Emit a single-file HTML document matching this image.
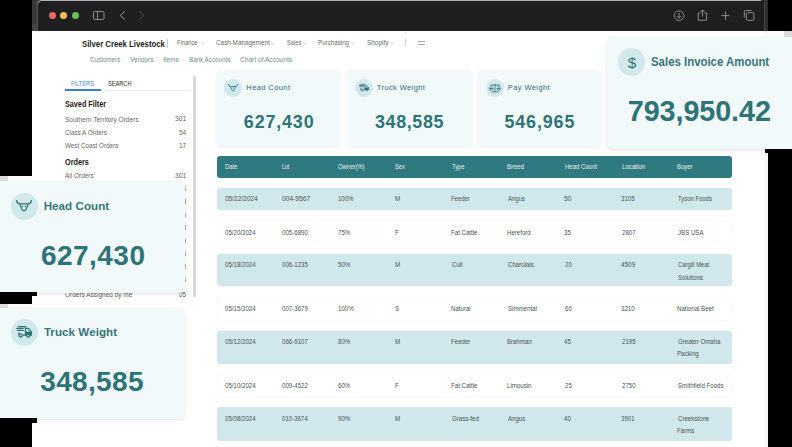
<!DOCTYPE html><html><head><meta charset="utf-8"><style>
*{margin:0;padding:0;box-sizing:border-box}
html,body{width:792px;height:447px;overflow:hidden;background:#000}
body{position:relative;font-family:"Liberation Sans",sans-serif}
.t{position:absolute;white-space:nowrap;line-height:1}
.card{position:absolute;background:#f1f9fb;border-radius:4px}
.ic{position:absolute;border-radius:50%;background:#d1e8ec}
.row{position:absolute;left:217px;width:515px;border-radius:3px}
.rb{background:#d0e7ec}
.rw{background:#fff;box-shadow:0 0 1.2px rgba(0,0,0,0.15)}
svg{position:absolute;overflow:visible}
</style></head><body>
<div style="position:absolute;left:32px;top:0;width:7px;height:31.4px;background:#38383a"></div>
<div style="position:absolute;left:32px;top:24px;width:6px;height:7.4px;background:#444446"></div>
<div style="position:absolute;left:761px;top:0;width:7px;height:31.4px;background:#2e2e30"></div>
<div style="position:absolute;left:32px;top:0;width:12px;height:6px;background:#3a3a3c"></div>
<div style="position:absolute;left:37.2px;top:0;width:724px;height:31px;background:#1f1f22;border-top-left-radius:5px;box-shadow:inset 0 1px 0 #b0b0b2, inset 0.7px 0 0 #6a6a6c"></div>
<div style="position:absolute;left:32px;top:31px;width:736px;height:416px;background:#fff"></div>
<div style="position:absolute;left:764.5px;top:31px;width:3.5px;height:416px;background:#f6f6f6"></div>
<div style="position:absolute;left:761px;top:1px;width:3.5px;height:30px;background:#1f1f22"></div>
<div style="position:absolute;left:764.2px;top:1px;width:0.8px;height:30px;background:#4a4a4c"></div>
<div style="position:absolute;left:0;top:175.8px;width:8px;height:5.5px;background:#dcdcdc"></div>
<div style="position:absolute;left:8px;top:175.8px;width:24px;height:5.5px;background:#fbfbfb"></div>
<div style="position:absolute;left:0;top:303.7px;width:8px;height:4px;background:#dcdcdc"></div>
<div style="position:absolute;left:8px;top:303.7px;width:24px;height:4px;background:#fbfbfb"></div>
<div style="position:absolute;left:768px;top:31.4px;width:16px;height:7px;background:#fbfbfb"></div>
<div style="position:absolute;left:784px;top:31.4px;width:8px;height:7px;background:#dcdcdc"></div>
<div style="position:absolute;left:48.6px;top:12px;width:7.2px;height:7.2px;border-radius:50%;background:#ec6a5e"></div>
<div style="position:absolute;left:60.0px;top:12px;width:7.2px;height:7.2px;border-radius:50%;background:#f4bf4f"></div>
<div style="position:absolute;left:71.6px;top:12px;width:7.2px;height:7.2px;border-radius:50%;background:#61c454"></div>
<svg style="left:0;top:0" width="792" height="31"><rect x="93.5" y="11.5" width="10.5" height="8" rx="1.2" fill="none" stroke="#8d8d90" stroke-width="1"/><line x1="97.5" y1="11.5" x2="97.5" y2="19.5" stroke="#8d8d90" stroke-width="1"/><path d="M124.8 11.3 L120.3 15.5 L124.8 19.7" fill="none" stroke="#9d9d9f" stroke-width="1"/><path d="M139.3 11.3 L143.8 15.5 L139.3 19.7" fill="none" stroke="#4d4d50" stroke-width="1"/><circle cx="679" cy="15.7" r="4.8" fill="none" stroke="#9a9a9c" stroke-width="0.9"/><path d="M679 13 L679 18 M677 16.2 L679 18.2 L681 16.2" fill="none" stroke="#9a9a9c" stroke-width="0.9"/><path d="M700.3 13 L698.3 13 L698.3 20.2 L706.6 20.2 L706.6 13 L704.6 13" fill="none" stroke="#9a9a9c" stroke-width="0.9"/><path d="M702.5 16.5 L702.5 10 M700.5 12 L702.5 10 L704.5 12" fill="none" stroke="#9a9a9c" stroke-width="0.9"/><path d="M725.5 11.5 V19.8 M721.4 15.6 H729.6" stroke="#9a9a9c" stroke-width="0.9"/><path d="M744.3 17.5 V11.8 Q744.3 10.5 745.6 10.5 H751.5" fill="none" stroke="#9a9a9c" stroke-width="0.9"/><rect x="746.3" y="12.7" width="7.6" height="7.6" rx="1" fill="none" stroke="#9a9a9c" stroke-width="0.9"/></svg>
<div class="t" id="brand" style="left:81.73px;top:40.36px;font-size:8.551px;letter-spacing:0.000px;transform:scaleX(0.9088);transform-origin:0 0;color:#1c1c1e;font-weight:bold">Silver Creek Livestock</div>
<div style="position:absolute;left:167.3px;top:38.5px;width:0.7px;height:9px;background:#c8c8c8"></div>
<div class="t" id="n1_0" style="left:177.47px;top:39.42px;font-size:7.536px;letter-spacing:0.000px;transform:scaleX(0.7694);transform-origin:0 0;color:#6a6a6c;font-weight:normal">Finance</div>
<div class="t" id="n1_1" style="left:216.12px;top:39.42px;font-size:7.536px;letter-spacing:0.000px;transform:scaleX(0.8466);transform-origin:0 0;color:#6a6a6c;font-weight:normal">Cash Management</div>
<div class="t" id="n1_2" style="left:286.71px;top:39.42px;font-size:7.536px;letter-spacing:0.000px;transform:scaleX(0.7582);transform-origin:0 0;color:#6a6a6c;font-weight:normal">Sales</div>
<div class="t" id="n1_3" style="left:317.94px;top:39.42px;font-size:7.536px;letter-spacing:0.000px;transform:scaleX(0.8258);transform-origin:0 0;color:#6a6a6c;font-weight:normal">Purchasing</div>
<div class="t" id="n1_4" style="left:366.68px;top:39.42px;font-size:7.536px;letter-spacing:0.000px;transform:scaleX(0.8536);transform-origin:0 0;color:#6a6a6c;font-weight:normal">Shopify</div>
<svg style="left:0;top:0" width="792" height="60"><path d="M201.0 42.6 L202.8 44.4 L204.6 42.6 M271.0 42.6 L272.8 44.4 L274.6 42.6 M303.5 42.6 L305.3 44.4 L307.1 42.6 M351.2 42.6 L353.0 44.4 L354.8 42.6 M390.0 42.6 L391.8 44.4 L393.6 42.6 " fill="none" stroke="#aaa" stroke-width="0.6"/></svg>
<div style="position:absolute;left:405px;top:38.7px;width:0.7px;height:8.6px;background:#d4d4d4"></div>
<div style="position:absolute;left:418.3px;top:40.8px;width:6.6px;height:1.3px;background:#ababab"></div>
<div style="position:absolute;left:418.3px;top:44.2px;width:6.6px;height:1.3px;background:#ababab"></div>
<div class="t" id="n2_0" style="left:90.12px;top:57.34px;font-size:6.667px;letter-spacing:0.000px;transform:scaleX(0.9412);transform-origin:0 0;color:#6f8e8e;font-weight:normal">Customers</div>
<div class="t" id="n2_1" style="left:129.95px;top:57.34px;font-size:6.667px;letter-spacing:0.000px;transform:scaleX(0.9583);transform-origin:0 0;color:#6f8e8e;font-weight:normal">Vendors</div>
<div class="t" id="n2_2" style="left:163.34px;top:57.34px;font-size:6.667px;letter-spacing:0.000px;transform:scaleX(0.9607);transform-origin:0 0;color:#6f8e8e;font-weight:normal">Items</div>
<div class="t" id="n2_3" style="left:188.90px;top:57.34px;font-size:6.667px;letter-spacing:0.000px;transform:scaleX(0.9370);transform-origin:0 0;color:#6f8e8e;font-weight:normal">Bank Accounts</div>
<div class="t" id="n2_4" style="left:240.10px;top:57.34px;font-size:6.667px;letter-spacing:0.000px;transform:scaleX(0.9912);transform-origin:0 0;color:#6f8e8e;font-weight:normal">Chart of Accounts</div>
<div class="t" id="filters" style="left:71.01px;top:79.88px;font-size:7.681px;letter-spacing:0.000px;transform:scaleX(0.7407);transform-origin:0 0;color:#4a8cd8;font-weight:normal">FILTERS</div>
<div class="t" id="search" style="left:107.74px;top:79.88px;font-size:7.681px;letter-spacing:0.000px;transform:scaleX(0.7342);transform-origin:0 0;color:#2c2c2c;font-weight:normal">SEARCH</div>
<div style="position:absolute;left:64.3px;top:89.8px;width:126px;height:0.8px;background:#ebebeb"></div>
<div style="position:absolute;left:64.5px;top:89.2px;width:36.2px;height:1.5px;background:#3a7fd2"></div>
<div style="position:absolute;left:192.9px;top:76px;width:2.9px;height:221px;background:#d9d9d9;border-radius:1px"></div>
<div class="t" id="saved" style="left:64.72px;top:100.99px;font-size:8.261px;letter-spacing:0.000px;transform:scaleX(0.8769);transform-origin:0 0;color:#1a1a1a;font-weight:bold">Saved Filter</div>
<div class="t" id="orders" style="left:64.64px;top:158.93px;font-size:8.261px;letter-spacing:0.000px;transform:scaleX(0.8842);transform-origin:0 0;color:#1a1a1a;font-weight:bold">Orders</div>
<div class="t" id="sd_0" style="left:64.70px;top:116.76px;font-size:6.667px;letter-spacing:0.000px;transform:scaleX(0.9810);transform-origin:0 0;color:#686868;font-weight:normal">Southern Territory Orders</div>
<div class="t" id="sd_1" style="left:64.66px;top:130.19px;font-size:6.667px;letter-spacing:0.000px;transform:scaleX(0.9429);transform-origin:0 0;color:#686868;font-weight:normal">Class A Orders</div>
<div class="t" id="sd_2" style="left:64.95px;top:143.42px;font-size:6.667px;letter-spacing:0.000px;transform:scaleX(0.9440);transform-origin:0 0;color:#686868;font-weight:normal">West Coast Orders</div>
<div class="t" id="sd_3" style="left:64.98px;top:173.42px;font-size:6.667px;letter-spacing:0.000px;transform:scaleX(0.9695);transform-origin:0 0;color:#686868;font-weight:normal">All Orders</div>
<div class="t" id="sn_0" style="left:175.07px;top:116.43px;font-size:6.667px;letter-spacing:0.000px;transform:scaleX(1.0017);transform-origin:0 0;color:#686868;font-weight:normal">301</div>
<div class="t" id="sn_1" style="left:178.50px;top:130.19px;font-size:6.667px;letter-spacing:0.000px;transform:scaleX(0.9771);transform-origin:0 0;color:#686868;font-weight:normal">54</div>
<div class="t" id="sn_2" style="left:178.64px;top:143.42px;font-size:6.667px;letter-spacing:0.000px;transform:scaleX(0.9758);transform-origin:0 0;color:#686868;font-weight:normal">17</div>
<div class="t" id="sn_3" style="left:175.07px;top:173.39px;font-size:6.667px;letter-spacing:0.000px;transform:scaleX(1.0017);transform-origin:0 0;color:#686868;font-weight:normal">301</div>
<div class="t" id="hd_0" style="left:64.51px;top:185.98px;font-size:6.667px;letter-spacing:0.000px;transform:scaleX(0.9758);transform-origin:0 0;color:#686868;font-weight:normal">Open Orders</div>
<div class="t" id="hd_1" style="left:64.48px;top:198.93px;font-size:6.667px;letter-spacing:0.000px;transform:scaleX(0.9758);transform-origin:0 0;color:#686868;font-weight:normal">Closed Orders</div>
<div class="t" id="hd_2" style="left:64.29px;top:211.88px;font-size:6.667px;letter-spacing:0.000px;transform:scaleX(0.9758);transform-origin:0 0;color:#686868;font-weight:normal">Pending Orders</div>
<div class="t" id="hd_3" style="left:64.51px;top:224.83px;font-size:6.667px;letter-spacing:0.000px;transform:scaleX(0.9758);transform-origin:0 0;color:#686868;font-weight:normal">Shipped Orders</div>
<div class="t" id="hd_4" style="left:64.23px;top:237.78px;font-size:6.667px;letter-spacing:0.000px;transform:scaleX(0.9758);transform-origin:0 0;color:#686868;font-weight:normal">Invoiced Orders</div>
<div class="t" id="hd_5" style="left:64.29px;top:250.73px;font-size:6.667px;letter-spacing:0.000px;transform:scaleX(0.9758);transform-origin:0 0;color:#686868;font-weight:normal">Draft Orders</div>
<div class="t" id="hd_6" style="left:64.48px;top:263.68px;font-size:6.667px;letter-spacing:0.000px;transform:scaleX(0.9758);transform-origin:0 0;color:#686868;font-weight:normal">Cancelled Orders</div>
<div class="t" id="hd_7" style="left:64.29px;top:276.63px;font-size:6.667px;letter-spacing:0.000px;transform:scaleX(0.9758);transform-origin:0 0;color:#686868;font-weight:normal">Returned Orders</div>
<div class="t" id="hn_0" style="left:178.87px;top:185.98px;font-size:6.667px;letter-spacing:0.000px;transform:scaleX(0.9758);transform-origin:0 0;color:#686868;font-weight:normal">24</div>
<div class="t" id="hn_1" style="left:175.87px;top:198.93px;font-size:6.667px;letter-spacing:0.000px;transform:scaleX(0.9758);transform-origin:0 0;color:#686868;font-weight:normal">118</div>
<div class="t" id="hn_2" style="left:178.93px;top:211.88px;font-size:6.667px;letter-spacing:0.000px;transform:scaleX(0.9758);transform-origin:0 0;color:#686868;font-weight:normal">36</div>
<div class="t" id="hn_3" style="left:178.93px;top:224.83px;font-size:6.667px;letter-spacing:0.000px;transform:scaleX(0.9758);transform-origin:0 0;color:#686868;font-weight:normal">48</div>
<div class="t" id="hn_4" style="left:178.93px;top:237.78px;font-size:6.667px;letter-spacing:0.000px;transform:scaleX(0.9758);transform-origin:0 0;color:#686868;font-weight:normal">25</div>
<div class="t" id="hn_5" style="left:178.94px;top:250.73px;font-size:6.667px;letter-spacing:0.000px;transform:scaleX(0.9758);transform-origin:0 0;color:#686868;font-weight:normal">16</div>
<div class="t" id="hn_6" style="left:178.94px;top:263.68px;font-size:6.667px;letter-spacing:0.000px;transform:scaleX(0.9758);transform-origin:0 0;color:#686868;font-weight:normal">18</div>
<div class="t" id="hn_7" style="left:178.86px;top:276.63px;font-size:6.667px;letter-spacing:0.000px;transform:scaleX(0.9758);transform-origin:0 0;color:#686868;font-weight:normal">34</div>
<div class="t" id="assigned" style="left:64.67px;top:291.53px;font-size:6.667px;letter-spacing:0.000px;transform:scaleX(0.9726);transform-origin:0 0;color:#5a5a5a;font-weight:normal">Orders Assigned by me</div>
<div class="t" id="assn" style="left:178.57px;top:291.53px;font-size:6.667px;letter-spacing:0.000px;transform:scaleX(0.9758);transform-origin:0 0;color:#5a5a5a;font-weight:normal">05</div>
<div class="card" style="left:217px;top:71px;width:123.3px;height:75.4px;box-shadow:0 0.5px 4px rgba(0,0,0,0.07)"></div>
<div class="ic" style="left:224.10px;top:78.80px;width:18px;height:18px"></div>
<svg style="left:227.90px;top:83.90px" width="10.00" height="7.50" viewBox="0 0 20 15"><path d="M1.0 0.8 C0.9 3.2 2.2 4.6 4.6 4.8 H15.4 C17.8 4.6 19.1 3.2 19.0 0.8" fill="none" stroke="#2f7276" stroke-width="1.72" stroke-linecap="round"/><path d="M4.8 5.2 L5.6 7.6 L8.2 13.0 Q10 14.6 11.8 13.0 L14.4 7.6 L15.2 5.2" fill="none" stroke="#2f7276" stroke-width="1.5" stroke-linejoin="round"/><circle cx="8.2" cy="8.0" r="0.95" fill="#2f7276"/><circle cx="11.8" cy="8.0" r="0.95" fill="#2f7276"/></svg>
<div class="t" id="c1t" style="left:246.34px;top:84.40px;font-size:7.536px;letter-spacing:0.395px;color:#2f6e72;font-weight:normal">Head Count</div>
<div class="t" id="c1n" style="left:243.85px;top:114.27px;font-size:17.917px;letter-spacing:0.843px;color:#2e7377;font-weight:bold">627,430</div>
<div class="card" style="left:347.2px;top:71px;width:124.4px;height:75.4px;box-shadow:0 0.5px 4px rgba(0,0,0,0.07)"></div>
<div class="ic" style="left:354.60px;top:78.80px;width:18px;height:18px"></div>
<svg style="left:359.06px;top:83.50px" width="9.92" height="7.44" viewBox="-2 0 16 12"><path d="M0 0.6 H7.5 V9.2 M7.5 2.3 H10.4 L13.4 5.8 V9.2 H12.1 M8.4 9.2 H4.6 M0.9 6.4 V8.6" fill="none" stroke="#2f7276" stroke-width="1.3" stroke-linejoin="round"/><path d="M-1.3 2.3 H5.2 M-0.6 4.4 H5.2" fill="none" stroke="#2f7276" stroke-width="1.3" stroke-linecap="round"/><path d="M7.5 5.6 H13.4 V9.2 H7.5 Z" fill="#2f7276"/><circle cx="2.6" cy="9.5" r="1.6" fill="none" stroke="#2f7276" stroke-width="1.3"/><circle cx="10.2" cy="9.5" r="1.6" fill="none" stroke="#2f7276" stroke-width="1.3"/></svg>
<div class="t" id="c2t" style="left:376.87px;top:84.40px;font-size:7.536px;letter-spacing:0.376px;color:#2f6e72;font-weight:normal">Truck Weight</div>
<div class="t" id="c2n" style="left:374.99px;top:114.27px;font-size:17.917px;letter-spacing:0.629px;color:#2e7377;font-weight:bold">348,585</div>
<div class="card" style="left:478.3px;top:71px;width:122.7px;height:75.2px;box-shadow:0 0.5px 4px rgba(0,0,0,0.07)"></div>
<div class="ic" style="left:486.00px;top:78.80px;width:18px;height:18px"></div>
<svg style="left:489.00px;top:83.50px" width="12.00" height="9.00" viewBox="0 0 12 9"><path d="M6 0.2 V7.8 M3.2 7.9 H8.8 M2.2 1.0 H9.8" fill="none" stroke="#2f7276" stroke-width="0.85" stroke-linecap="round"/><path d="M0.4 4.4 A1.8 1.9 0 0 0 4.0 4.4 Z M8.0 4.4 A1.8 1.9 0 0 0 11.6 4.4 Z" fill="none" stroke="#2f7276" stroke-width="0.85" stroke-linejoin="round"/><path d="M2.2 1.0 L0.6 4.3 M2.2 1.0 L3.8 4.3 M9.8 1.0 L8.2 4.3 M9.8 1.0 L11.4 4.3" fill="none" stroke="#2f7276" stroke-width="0.59"/></svg>
<div class="t" id="c3t" style="left:507.80px;top:84.40px;font-size:7.536px;letter-spacing:0.395px;color:#2f6e72;font-weight:normal">Pay Weight</div>
<div class="t" id="c3n" style="left:504.46px;top:114.27px;font-size:17.917px;letter-spacing:0.869px;color:#2e7377;font-weight:bold">546,965</div>
<div style="position:absolute;left:217px;top:156px;width:515px;height:21.6px;background:#2e7a80;border-radius:3px"></div>
<div class="t" id="th_0" style="left:224.51px;top:164.22px;font-size:6.377px;letter-spacing:0.000px;transform:scaleX(0.9267);transform-origin:0 0;color:#e4f1f2;font-weight:normal">Date</div>
<div class="t" id="th_1" style="left:281.51px;top:164.22px;font-size:6.377px;letter-spacing:0.000px;transform:scaleX(0.8230);transform-origin:0 0;color:#e4f1f2;font-weight:normal">Lot</div>
<div class="t" id="th_2" style="left:338.20px;top:164.22px;font-size:6.377px;letter-spacing:0.000px;transform:scaleX(0.9281);transform-origin:0 0;color:#e4f1f2;font-weight:normal">Owner(%)</div>
<div class="t" id="th_3" style="left:394.72px;top:164.22px;font-size:6.377px;letter-spacing:0.000px;transform:scaleX(0.9017);transform-origin:0 0;color:#e4f1f2;font-weight:normal">Sex</div>
<div class="t" id="th_4" style="left:451.84px;top:164.22px;font-size:6.377px;letter-spacing:0.000px;transform:scaleX(0.8997);transform-origin:0 0;color:#e4f1f2;font-weight:normal">Type</div>
<div class="t" id="th_5" style="left:507.49px;top:164.22px;font-size:6.377px;letter-spacing:0.000px;transform:scaleX(1.0074);transform-origin:0 0;color:#e4f1f2;font-weight:normal">Breed</div>
<div class="t" id="th_6" style="left:564.93px;top:164.22px;font-size:6.377px;letter-spacing:0.000px;transform:scaleX(0.9386);transform-origin:0 0;color:#e4f1f2;font-weight:normal">Head Count</div>
<div class="t" id="th_7" style="left:621.93px;top:164.22px;font-size:6.377px;letter-spacing:0.000px;transform:scaleX(0.9662);transform-origin:0 0;color:#e4f1f2;font-weight:normal">Location</div>
<div class="t" id="th_8" style="left:677.49px;top:164.22px;font-size:6.377px;letter-spacing:0.000px;transform:scaleX(0.9296);transform-origin:0 0;color:#e4f1f2;font-weight:normal">Buyer</div>
<div class="row rb" style="top:188.3px;height:21.4px"></div>
<div class="row rw" style="top:221px;height:21.0px"></div>
<div class="row rb" style="top:253.6px;height:32.8px"></div>
<div class="row rw" style="top:297.6px;height:22.0px"></div>
<div class="row rb" style="top:330.6px;height:33.0px"></div>
<div class="row rw" style="top:374.6px;height:21.4px"></div>
<div class="row rb" style="top:407.4px;height:33.2px"></div>
<div class="t" id="td_0_0" style="left:224.75px;top:196.29px;font-size:6.806px;letter-spacing:0.000px;transform:scaleX(0.9579);transform-origin:0 0;color:#4a5454;font-weight:normal">05/22/2024</div>
<div class="t" id="td_0_1" style="left:281.75px;top:196.29px;font-size:6.806px;letter-spacing:0.000px;transform:scaleX(0.9794);transform-origin:0 0;color:#4a5454;font-weight:normal">004-9567</div>
<div class="t" id="td_0_2" style="left:338.00px;top:196.29px;font-size:6.806px;letter-spacing:0.000px;transform:scaleX(0.8920);transform-origin:0 0;color:#4a5454;font-weight:normal">100%</div>
<div class="t" id="td_0_3" style="left:395.36px;top:196.29px;font-size:6.806px;letter-spacing:0.000px;transform:scaleX(0.8990);transform-origin:0 0;color:#4a5454;font-weight:normal">M</div>
<div class="t" id="td_0_4" style="left:451.46px;top:196.29px;font-size:6.806px;letter-spacing:0.000px;transform:scaleX(0.8699);transform-origin:0 0;color:#4a5454;font-weight:normal">Feeder</div>
<div class="t" id="td_0_5" style="left:507.98px;top:196.29px;font-size:6.806px;letter-spacing:0.000px;transform:scaleX(0.8838);transform-origin:0 0;color:#4a5454;font-weight:normal">Angus</div>
<div class="t" id="td_0_6" style="left:564.26px;top:196.29px;font-size:6.806px;letter-spacing:0.000px;transform:scaleX(0.9817);transform-origin:0 0;color:#4a5454;font-weight:normal">50</div>
<div class="t" id="td_0_7" style="left:621.27px;top:196.29px;font-size:6.806px;letter-spacing:0.000px;transform:scaleX(0.9070);transform-origin:0 0;color:#4a5454;font-weight:normal">3105</div>
<div class="t" id="td_0_8" style="left:677.86px;top:196.29px;font-size:6.806px;letter-spacing:0.000px;transform:scaleX(0.8699);transform-origin:0 0;color:#4a5454;font-weight:normal">Tyson Foods</div>
<div class="t" id="td_1_0" style="left:224.75px;top:229.71px;font-size:6.806px;letter-spacing:0.000px;transform:scaleX(0.8990);transform-origin:0 0;color:#4a5454;font-weight:normal">05/20/2024</div>
<div class="t" id="td_1_1" style="left:281.75px;top:229.71px;font-size:6.806px;letter-spacing:0.000px;transform:scaleX(0.8990);transform-origin:0 0;color:#4a5454;font-weight:normal">005-6890</div>
<div class="t" id="td_1_2" style="left:338.16px;top:229.71px;font-size:6.806px;letter-spacing:0.000px;transform:scaleX(0.8990);transform-origin:0 0;color:#4a5454;font-weight:normal">75%</div>
<div class="t" id="td_1_3" style="left:395.36px;top:229.71px;font-size:6.806px;letter-spacing:0.000px;transform:scaleX(0.8990);transform-origin:0 0;color:#4a5454;font-weight:normal">F</div>
<div class="t" id="td_1_4" style="left:451.47px;top:229.71px;font-size:6.806px;letter-spacing:0.000px;transform:scaleX(0.8990);transform-origin:0 0;color:#4a5454;font-weight:normal">Fat Cattle</div>
<div class="t" id="td_1_5" style="left:507.49px;top:229.71px;font-size:6.806px;letter-spacing:0.000px;transform:scaleX(0.8990);transform-origin:0 0;color:#4a5454;font-weight:normal">Hereford</div>
<div class="t" id="td_1_6" style="left:564.26px;top:229.71px;font-size:6.806px;letter-spacing:0.000px;transform:scaleX(0.8990);transform-origin:0 0;color:#4a5454;font-weight:normal">35</div>
<div class="t" id="td_1_7" style="left:622.10px;top:229.71px;font-size:6.806px;letter-spacing:0.000px;transform:scaleX(0.8990);transform-origin:0 0;color:#4a5454;font-weight:normal">2807</div>
<div class="t" id="td_1_8" style="left:677.89px;top:229.71px;font-size:6.806px;letter-spacing:0.000px;transform:scaleX(0.8990);transform-origin:0 0;color:#4a5454;font-weight:normal">JBS USA</div>
<div class="t" id="td_2_0" style="left:224.75px;top:261.77px;font-size:6.806px;letter-spacing:0.000px;transform:scaleX(0.8990);transform-origin:0 0;color:#4a5454;font-weight:normal">05/18/2024</div>
<div class="t" id="td_2_1" style="left:281.75px;top:261.77px;font-size:6.806px;letter-spacing:0.000px;transform:scaleX(0.8990);transform-origin:0 0;color:#4a5454;font-weight:normal">006-1235</div>
<div class="t" id="td_2_2" style="left:338.22px;top:261.77px;font-size:6.806px;letter-spacing:0.000px;transform:scaleX(0.8990);transform-origin:0 0;color:#4a5454;font-weight:normal">50%</div>
<div class="t" id="td_2_3" style="left:395.36px;top:261.77px;font-size:6.806px;letter-spacing:0.000px;transform:scaleX(0.8990);transform-origin:0 0;color:#4a5454;font-weight:normal">M</div>
<div class="t" id="td_2_4" style="left:451.65px;top:261.77px;font-size:6.806px;letter-spacing:0.000px;transform:scaleX(0.8990);transform-origin:0 0;color:#4a5454;font-weight:normal">Cull</div>
<div class="t" id="td_2_5" style="left:507.67px;top:261.77px;font-size:6.806px;letter-spacing:0.000px;transform:scaleX(0.8990);transform-origin:0 0;color:#4a5454;font-weight:normal">Charolais</div>
<div class="t" id="td_2_6" style="left:565.10px;top:261.77px;font-size:6.806px;letter-spacing:0.000px;transform:scaleX(0.8990);transform-origin:0 0;color:#4a5454;font-weight:normal">20</div>
<div class="t" id="td_2_7" style="left:621.39px;top:261.77px;font-size:6.806px;letter-spacing:0.000px;transform:scaleX(0.9396);transform-origin:0 0;color:#4a5454;font-weight:normal">4509</div>
<div class="t" id="td_2_8a" style="left:677.67px;top:261.77px;font-size:6.806px;letter-spacing:0.000px;transform:scaleX(0.8596);transform-origin:0 0;color:#4a5454;font-weight:normal">Cargill Meat</div>
<div class="t" id="td_2_8b" style="left:677.70px;top:274.54px;font-size:6.806px;letter-spacing:0.000px;transform:scaleX(0.8990);transform-origin:0 0;color:#4a5454;font-weight:normal">Solutions</div>
<div class="t" id="td_3_0" style="left:224.75px;top:305.77px;font-size:6.806px;letter-spacing:0.000px;transform:scaleX(0.8990);transform-origin:0 0;color:#4a5454;font-weight:normal">05/15/2024</div>
<div class="t" id="td_3_1" style="left:281.75px;top:305.77px;font-size:6.806px;letter-spacing:0.000px;transform:scaleX(0.8990);transform-origin:0 0;color:#4a5454;font-weight:normal">007-3679</div>
<div class="t" id="td_3_2" style="left:338.00px;top:305.77px;font-size:6.806px;letter-spacing:0.000px;transform:scaleX(0.8990);transform-origin:0 0;color:#4a5454;font-weight:normal">100%</div>
<div class="t" id="td_3_3" style="left:394.69px;top:305.77px;font-size:6.806px;letter-spacing:0.000px;transform:scaleX(0.8990);transform-origin:0 0;color:#4a5454;font-weight:normal">S</div>
<div class="t" id="td_3_4" style="left:451.47px;top:305.77px;font-size:6.806px;letter-spacing:0.000px;transform:scaleX(0.8990);transform-origin:0 0;color:#4a5454;font-weight:normal">Natural</div>
<div class="t" id="td_3_5" style="left:507.70px;top:305.77px;font-size:6.806px;letter-spacing:0.000px;transform:scaleX(0.8990);transform-origin:0 0;color:#4a5454;font-weight:normal">Simmental</div>
<div class="t" id="td_3_6" style="left:565.10px;top:305.77px;font-size:6.806px;letter-spacing:0.000px;transform:scaleX(0.8990);transform-origin:0 0;color:#4a5454;font-weight:normal">60</div>
<div class="t" id="td_3_7" style="left:621.27px;top:305.77px;font-size:6.806px;letter-spacing:0.000px;transform:scaleX(0.8990);transform-origin:0 0;color:#4a5454;font-weight:normal">3210</div>
<div class="t" id="td_3_8" style="left:677.49px;top:305.77px;font-size:6.806px;letter-spacing:0.000px;transform:scaleX(0.8990);transform-origin:0 0;color:#4a5454;font-weight:normal">National Beef</div>
<div class="t" id="td_4_0" style="left:224.75px;top:338.77px;font-size:6.806px;letter-spacing:0.000px;transform:scaleX(0.8990);transform-origin:0 0;color:#4a5454;font-weight:normal">05/12/2024</div>
<div class="t" id="td_4_1" style="left:281.75px;top:338.77px;font-size:6.806px;letter-spacing:0.000px;transform:scaleX(0.8990);transform-origin:0 0;color:#4a5454;font-weight:normal">066-9107</div>
<div class="t" id="td_4_2" style="left:338.19px;top:338.77px;font-size:6.806px;letter-spacing:0.000px;transform:scaleX(0.8990);transform-origin:0 0;color:#4a5454;font-weight:normal">80%</div>
<div class="t" id="td_4_3" style="left:395.36px;top:338.77px;font-size:6.806px;letter-spacing:0.000px;transform:scaleX(0.8990);transform-origin:0 0;color:#4a5454;font-weight:normal">M</div>
<div class="t" id="td_4_4" style="left:451.46px;top:338.77px;font-size:6.806px;letter-spacing:0.000px;transform:scaleX(0.8990);transform-origin:0 0;color:#4a5454;font-weight:normal">Feeder</div>
<div class="t" id="td_4_5" style="left:507.48px;top:338.77px;font-size:6.806px;letter-spacing:0.000px;transform:scaleX(0.8990);transform-origin:0 0;color:#4a5454;font-weight:normal">Brahman</div>
<div class="t" id="td_4_6" style="left:564.39px;top:338.77px;font-size:6.806px;letter-spacing:0.000px;transform:scaleX(0.8990);transform-origin:0 0;color:#4a5454;font-weight:normal">45</div>
<div class="t" id="td_4_7" style="left:622.10px;top:338.77px;font-size:6.806px;letter-spacing:0.000px;transform:scaleX(0.8990);transform-origin:0 0;color:#4a5454;font-weight:normal">2195</div>
<div class="t" id="td_4_8a" style="left:677.67px;top:338.77px;font-size:6.806px;letter-spacing:0.000px;transform:scaleX(0.8990);transform-origin:0 0;color:#4a5454;font-weight:normal">Greater Omaha</div>
<div class="t" id="td_4_8b" style="left:677.48px;top:351.11px;font-size:6.806px;letter-spacing:0.000px;transform:scaleX(0.8990);transform-origin:0 0;color:#4a5454;font-weight:normal">Packing</div>
<div class="t" id="td_5_0" style="left:224.75px;top:382.77px;font-size:6.806px;letter-spacing:0.000px;transform:scaleX(0.8990);transform-origin:0 0;color:#4a5454;font-weight:normal">05/10/2024</div>
<div class="t" id="td_5_1" style="left:281.75px;top:382.77px;font-size:6.806px;letter-spacing:0.000px;transform:scaleX(0.8990);transform-origin:0 0;color:#4a5454;font-weight:normal">009-4522</div>
<div class="t" id="td_5_2" style="left:338.16px;top:382.77px;font-size:6.806px;letter-spacing:0.000px;transform:scaleX(0.8990);transform-origin:0 0;color:#4a5454;font-weight:normal">60%</div>
<div class="t" id="td_5_3" style="left:395.36px;top:382.77px;font-size:6.806px;letter-spacing:0.000px;transform:scaleX(0.8990);transform-origin:0 0;color:#4a5454;font-weight:normal">F</div>
<div class="t" id="td_5_4" style="left:451.47px;top:382.77px;font-size:6.806px;letter-spacing:0.000px;transform:scaleX(0.8990);transform-origin:0 0;color:#4a5454;font-weight:normal">Fat Cattle</div>
<div class="t" id="td_5_5" style="left:507.48px;top:382.77px;font-size:6.806px;letter-spacing:0.000px;transform:scaleX(0.8990);transform-origin:0 0;color:#4a5454;font-weight:normal">Limousin</div>
<div class="t" id="td_5_6" style="left:565.10px;top:382.77px;font-size:6.806px;letter-spacing:0.000px;transform:scaleX(0.8990);transform-origin:0 0;color:#4a5454;font-weight:normal">25</div>
<div class="t" id="td_5_7" style="left:622.10px;top:382.77px;font-size:6.806px;letter-spacing:0.000px;transform:scaleX(0.8990);transform-origin:0 0;color:#4a5454;font-weight:normal">2750</div>
<div class="t" id="td_5_8" style="left:677.70px;top:382.77px;font-size:6.806px;letter-spacing:0.000px;transform:scaleX(0.8990);transform-origin:0 0;color:#4a5454;font-weight:normal">Smithfield Foods</div>
<div class="t" id="td_6_0" style="left:224.75px;top:415.75px;font-size:6.806px;letter-spacing:0.000px;transform:scaleX(0.8990);transform-origin:0 0;color:#4a5454;font-weight:normal">05/08/2024</div>
<div class="t" id="td_6_1" style="left:281.75px;top:415.75px;font-size:6.806px;letter-spacing:0.000px;transform:scaleX(0.8990);transform-origin:0 0;color:#4a5454;font-weight:normal">010-3674</div>
<div class="t" id="td_6_2" style="left:338.19px;top:415.75px;font-size:6.806px;letter-spacing:0.000px;transform:scaleX(0.8990);transform-origin:0 0;color:#4a5454;font-weight:normal">90%</div>
<div class="t" id="td_6_3" style="left:395.36px;top:415.75px;font-size:6.806px;letter-spacing:0.000px;transform:scaleX(0.8990);transform-origin:0 0;color:#4a5454;font-weight:normal">M</div>
<div class="t" id="td_6_4" style="left:451.65px;top:415.75px;font-size:6.806px;letter-spacing:0.000px;transform:scaleX(0.8990);transform-origin:0 0;color:#4a5454;font-weight:normal">Grass-fed</div>
<div class="t" id="td_6_5" style="left:507.98px;top:415.75px;font-size:6.806px;letter-spacing:0.000px;transform:scaleX(0.8990);transform-origin:0 0;color:#4a5454;font-weight:normal">Angus</div>
<div class="t" id="td_6_6" style="left:564.39px;top:415.75px;font-size:6.806px;letter-spacing:0.000px;transform:scaleX(0.8990);transform-origin:0 0;color:#4a5454;font-weight:normal">40</div>
<div class="t" id="td_6_7" style="left:621.27px;top:415.75px;font-size:6.806px;letter-spacing:0.000px;transform:scaleX(0.8990);transform-origin:0 0;color:#4a5454;font-weight:normal">3901</div>
<div class="t" id="td_6_8a" style="left:677.67px;top:415.75px;font-size:6.806px;letter-spacing:0.000px;transform:scaleX(0.8990);transform-origin:0 0;color:#4a5454;font-weight:normal">Creekstone</div>
<div class="t" id="td_6_8b" style="left:677.47px;top:428.22px;font-size:6.806px;letter-spacing:0.000px;transform:scaleX(0.8990);transform-origin:0 0;color:#4a5454;font-weight:normal">Farms</div>
<div class="row rw" style="top:451px;height:20px"></div>
<div class="card" style="left:607px;top:37.3px;width:190px;height:111.4px;border-radius:6px;box-shadow:0 1px 3px rgba(0,0,0,0.12)"></div>
<div class="ic" style="left:617.6px;top:48.2px;width:27.4px;height:27.4px"></div>
<div class="t" id="sid" style="left:627.87px;top:54.83px;font-size:15.278px;letter-spacing:0.000px;color:#2f7276;font-weight:normal">$</div>
<div class="t" id="sit" style="left:650.65px;top:56.00px;font-size:12.464px;letter-spacing:0.000px;transform:scaleX(0.9164);transform-origin:0 0;color:#357579;font-weight:bold">Sales Invoice Amount</div>
<div class="t" id="sin" style="left:627.77px;top:97.35px;font-size:28.750px;letter-spacing:-0.082px;color:#2e7377;font-weight:bold">793,950.42</div>
<div class="card" style="left:-6px;top:181px;width:191px;height:111.5px;border-radius:6px;box-shadow:0 1px 3px rgba(0,0,0,0.12)"></div>
<div class="ic" style="left:11px;top:192.7px;width:27px;height:27px"></div>
<svg style="left:16.40px;top:199.80px" width="16.00" height="12.00" viewBox="0 0 20 15"><path d="M1.0 0.8 C0.9 3.2 2.2 4.6 4.6 4.8 H15.4 C17.8 4.6 19.1 3.2 19.0 0.8" fill="none" stroke="#2f7276" stroke-width="1.72" stroke-linecap="round"/><path d="M4.8 5.2 L5.6 7.6 L8.2 13.0 Q10 14.6 11.8 13.0 L14.4 7.6 L15.2 5.2" fill="none" stroke="#2f7276" stroke-width="1.5" stroke-linejoin="round"/><circle cx="8.2" cy="8.0" r="0.95" fill="#2f7276"/><circle cx="11.8" cy="8.0" r="0.95" fill="#2f7276"/></svg>
<div class="t" id="f1t" style="left:43.71px;top:201.06px;font-size:11.594px;letter-spacing:0.050px;color:#357579;font-weight:bold">Head Count</div>
<div class="t" id="f1n" style="left:40.94px;top:242.06px;font-size:28.056px;letter-spacing:0.444px;color:#2e7377;font-weight:bold">627,430</div>
<div class="card" style="left:-6px;top:307.5px;width:191px;height:111.5px;border-radius:6px;box-shadow:0 1px 3px rgba(0,0,0,0.12)"></div>
<div class="ic" style="left:10.8px;top:318.5px;width:27px;height:27px"></div>
<svg style="left:15.90px;top:326.20px" width="16.00" height="12.00" viewBox="-2 0 16 12"><path d="M0 0.6 H7.5 V9.2 M7.5 2.3 H10.4 L13.4 5.8 V9.2 H12.1 M8.4 9.2 H4.6 M0.9 6.4 V8.6" fill="none" stroke="#2f7276" stroke-width="1.3" stroke-linejoin="round"/><path d="M-1.3 2.3 H5.2 M-0.6 4.4 H5.2" fill="none" stroke="#2f7276" stroke-width="1.3" stroke-linecap="round"/><path d="M7.5 5.6 H13.4 V9.2 H7.5 Z" fill="#2f7276"/><circle cx="2.6" cy="9.5" r="1.6" fill="none" stroke="#2f7276" stroke-width="1.3"/><circle cx="10.2" cy="9.5" r="1.6" fill="none" stroke="#2f7276" stroke-width="1.3"/></svg>
<div class="t" id="f2t" style="left:43.88px;top:327.23px;font-size:11.594px;letter-spacing:0.065px;color:#357579;font-weight:bold">Truck Weight</div>
<div class="t" id="f2n" style="left:40.26px;top:368.06px;font-size:28.056px;letter-spacing:0.310px;color:#2e7377;font-weight:bold">348,585</div>
<div style="position:absolute;left:0;top:292.4px;width:37px;height:3.8px;background:#000"></div>
<div style="position:absolute;left:0;top:418.3px;width:37px;height:4.7px;background:#000"></div>
<div style="position:absolute;left:764.8px;top:148.7px;width:28px;height:4.7px;background:#000"></div>
</body></html>
